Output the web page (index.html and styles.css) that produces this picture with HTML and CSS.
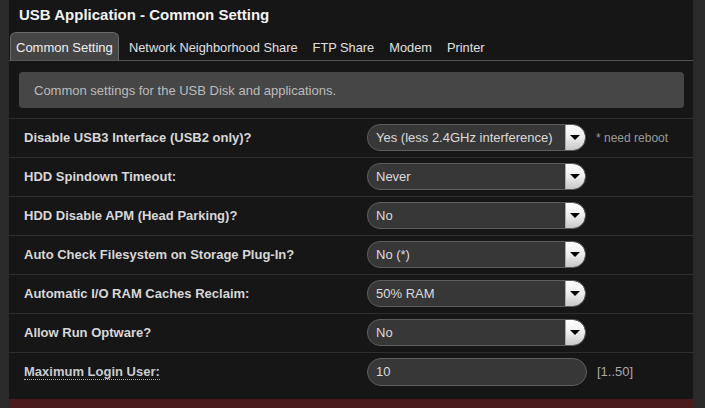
FILE: index.html
```html
<!DOCTYPE html>
<html>
<head>
<meta charset="utf-8">
<link rel="stylesheet" href="styles.css">
</head>
<body>
<div class="main">
  <h1 class="title">USB Application - Common Setting</h1>
  <div class="tabs">
    <span class="tab active">Common Setting</span>
    <span class="tab">Network Neighborhood Share</span>
    <span class="tab">FTP Share</span>
    <span class="tab">Modem</span>
    <span class="tab">Printer</span>
  </div>
  <div class="desc">Common settings for the USB Disk and applications.</div>
  <div class="table">
    <div class="row">
      <div class="label">Disable USB3 Interface (USB2 only)?</div>
      <div class="field"><div class="select"><span class="val">Yes (less 2.4GHz interference)</span><span class="btn"><span class="tri"></span></span></div><span class="note">* need reboot</span></div>
    </div>
    <div class="row">
      <div class="label">HDD Spindown Timeout:</div>
      <div class="field"><div class="select"><span class="val">Never</span><span class="btn"><span class="tri"></span></span></div></div>
    </div>
    <div class="row">
      <div class="label">HDD Disable APM (Head Parking)?</div>
      <div class="field"><div class="select"><span class="val">No</span><span class="btn"><span class="tri"></span></span></div></div>
    </div>
    <div class="row">
      <div class="label">Auto Check Filesystem on Storage Plug-In?</div>
      <div class="field"><div class="select"><span class="val">No (*)</span><span class="btn"><span class="tri"></span></span></div></div>
    </div>
    <div class="row">
      <div class="label">Automatic I/O RAM Caches Reclaim:</div>
      <div class="field"><div class="select"><span class="val">50% RAM</span><span class="btn"><span class="tri"></span></span></div></div>
    </div>
    <div class="row">
      <div class="label">Allow Run Optware?</div>
      <div class="field"><div class="select"><span class="val">No</span><span class="btn"><span class="tri"></span></span></div></div>
    </div>
    <div class="row last">
      <div class="label"><span class="hint">Maximum Login User:</span></div>
      <div class="field"><div class="input">10</div><span class="note range">[1..50]</span></div>
    </div>
  </div>
  <div class="footer"></div>
</div>
</body>
</html>
```
FILE: styles.css
```css
html, body {
  margin: 0;
  padding: 0;
}
body {
  background: #2a2a2a;
  font-family: "Liberation Sans", Arial, sans-serif;
  width: 705px;
  height: 408px;
  overflow: hidden;
}
.main {
  margin-left: 9px;
  width: 684px;
  height: 408px;
  background: #161616;
  display: flex;
  flex-direction: column;
}
.title {
  margin: 0;
  height: 33px;
  box-sizing: border-box;
  padding: 6px 0 0 10px;
  font-size: 15px;
  font-weight: bold;
  color: #f2f2f2;
  line-height: 18px;
}
.tabs {
  display: flex;
  gap: 1px;
  height: 28px;
  padding-left: 1px;
  border-bottom: 1px solid #555;
}
.tab {
  padding: 0 6px;
  font-size: 12.8px;
  color: #e0e0e0;
  line-height: 29px;
  border: 1px solid transparent;
  border-bottom: none;
  border-radius: 6px 6px 0 0;
  box-sizing: border-box;
  height: 28px;
}
.tab.active {
  background: #454545;
  border-color: #6a6a6a;
  color: #f0f0f0;
  font-size: 13px;
  padding: 0 5px;
  width: 109px;
  margin-right: 2px;
}
.desc {
  margin: 11px 9px 10px 10px;
  height: 36px;
  box-sizing: border-box;
  background: #464646;
  border-radius: 4px;
  padding-left: 15px;
  font-size: 13px;
  color: #bcbcbc;
  line-height: 38px;
}
.table {
  display: flex;
  flex-direction: column;
}
.row {
  display: flex;
  align-items: center;
  height: 39px;
  border-top: 1px solid #2e2e2e;
  box-sizing: border-box;
}
.row.last {
  height: 47px;
  padding-bottom: 8px;
}
.label {
  width: 358px;
  padding-left: 15px;
  box-sizing: border-box;
  font-size: 13px;
  font-weight: bold;
  color: #d8d8d8;
}
.hint {
  border-bottom: 1px dotted #aaa;
  color: #c8ccd0;
}
.field {
  display: flex;
  align-items: center;
  gap: 10px;
}
.select {
  width: 219px;
  height: 27px;
  box-sizing: border-box;
  border: 1px solid #5e5e5e;
  border-radius: 13px;
  background: #373737;
  display: flex;
  align-items: center;
  overflow: hidden;
  justify-content: space-between;
}
.val {
  padding-left: 8px;
  font-size: 13px;
  color: #dcdcdc;
}
.btn {
  width: 20px;
  height: 25px;
  background: linear-gradient(#ffffff, #f0f0f0 45%, #c8c8c8);
  border-left: 1px solid #aaa;
  display: flex;
  align-items: center;
  justify-content: center;
  border-radius: 0 12px 12px 0;
  box-sizing: border-box;
  padding-right: 2px;
}
.tri {
  width: 0;
  height: 0;
  border-left: 5px solid transparent;
  border-right: 5px solid transparent;
  border-top: 5px solid #000;
}
.note {
  font-size: 12px;
  color: #9a9a9a;
}
.range {
  font-size: 13px;
  color: #aaaaaa;
}
.input {
  width: 220px;
  height: 28px;
  box-sizing: border-box;
  border: 1px solid #5e5e5e;
  border-radius: 14px;
  background: #373737;
  padding-left: 8px;
  font-size: 13px;
  color: #dcdcdc;
  line-height: 26px;
}
.footer {
  height: 10px;
  background: #4a1b1b;
}
```
